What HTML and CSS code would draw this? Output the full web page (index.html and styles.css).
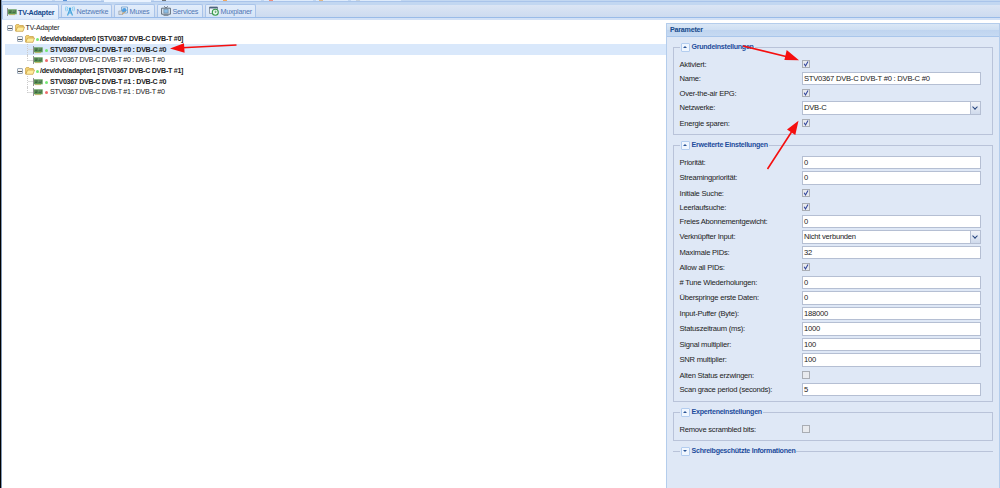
FILE: index.html
```
<!DOCTYPE html>
<html lang="de">
<head>
    <meta charset="utf-8">
    <title>TV-Adapter</title>
    <link rel="stylesheet" href="styles.css">
</head>
<body>

<svg class="defs">
    <symbol id="card" viewBox="0 0 10 8">
        <path d="M.5 0v8" stroke="#777" stroke-width=".8"/>
        <path d="M1 1.3h8.7v5H1z" fill="#5f9a58"/>
        <path d="M2 2.3h2.4v2.6H2zM5.5 2.3h3v2.4h-3z" fill="#3f6640"/>
        <path d="M2 6.6h6" stroke="#b9a94c" stroke-width=".8"/>
        <path d="M5 3h3M2.4 3h1" stroke="#a9c8a5" stroke-width=".6"/>
    </symbol>
    <symbol id="folder" viewBox="0 0 10 8">
        <path d="M.6 7V1.2L1.3.6h2.6l.7.9h3.7V3" fill="#f5d67a" stroke="#c49a3a" stroke-width=".7"/>
        <path d="M.8 7.3 2.5 3h7L8 7.3z" fill="#ffec9c" stroke="#c49a3a" stroke-width=".7"/>
    </symbol>
    <symbol id="antenna" viewBox="0 0 10 10">
        <path d="M5 3 2.5 9.5M5 3l2.5 6.5M3.5 7h3M4.2 5h1.6" fill="none" stroke="#48a5dc" stroke-width="1.2"/>
        <path d="M2.8.8q-1.3 2 0 4M7.2.8q1.3 2 0 4M1.2.3Q-.4 2.8 1.2 5.3M8.8.3q1.6 2.5 0 5" fill="none" stroke="#72c4ee" stroke-width=".8"/>
        <circle cx="5" cy="2.7" r="1.2" fill="#399bd5"/>
    </symbol>
    <symbol id="muxes" viewBox="0 0 10 10">
        <path d="M3.5 1h6v6h-6z" fill="#e8f2fb" stroke="#6e9cc9" stroke-width=".8"/>
        <path d="M.8 5h4v3.5h-4z" fill="#d5d9dd" stroke="#98a4b0" stroke-width=".7"/>
        <circle cx="6.3" cy="4.2" r="2.3" fill="#4e9fe2"/>
        <path d="m4 8.2 3.5-2.7" fill="none" stroke="#d9a35d" stroke-width="1"/>
    </symbol>
    <symbol id="tv" viewBox="0 0 10 10">
        <path d="M3 .3 5 2 7 .3M2.5 9.3h5" fill="none" stroke="#53616d" stroke-width=".8"/>
        <path d="M.6 2.2h8.8v6H.6z" fill="#dfebf6" stroke="#53616d" stroke-width=".9"/>
        <path d="M2.8 3.2h4.4v3.9H2.8z" fill="#8bbfe9" stroke="#647b91" stroke-width=".6"/>
    </symbol>
    <symbol id="planer" viewBox="0 0 10 10">
        <path d="M.5 1h8v6.5h-8z" fill="#eef4fa" stroke="#76828d" stroke-width=".8"/>
        <path d="M.5 1.7h8" stroke="#4c6480" stroke-width="1.5"/>
        <circle cx="6.3" cy="6.3" r="3" fill="#e9faec" stroke="#379b4b" stroke-width="1.1"/>
        <path d="M6.3 4.6v1.9l1.2-.7" fill="none" stroke="#267438" stroke-width=".7"/>
    </symbol>
    <symbol id="tick" viewBox="0 0 8 8">
        <path d="m2.2 3.8 1.3 2.2L6 1.6" fill="none" stroke="#31459c" stroke-width="1.1"/>
    </symbol>
</svg>

<div class="topbar">
    <i class="m1"></i><i class="m2"></i><i class="m3 current"></i><i class="m4"></i><i class="m5"></i><i class="m6"></i><i class="m7"></i><i class="m8"></i>
</div>

<nav class="tabs">
    <a class="tab active t1"><svg class="card"><use href="#card"/></svg>TV-Adapter</a>
    <a class="tab t2"><svg><use href="#antenna"/></svg>Netzwerke</a>
    <a class="tab t3"><svg><use href="#muxes"/></svg>Muxes</a>
    <a class="tab t4"><svg><use href="#tv"/></svg>Services</a>
    <a class="tab t5"><svg><use href="#planer"/></svg>Muxplaner</a>
</nav>

<main>
    <section class="tree">
        <div class="node root"><b class="minus"></b><svg><use href="#folder"/></svg><span>TV-Adapter</span></div>
        <div class="node adapter"><b class="minus"></b><svg><use href="#folder"/></svg><i class="on"></i><span>/dev/dvb/adapter0 [STV0367 DVB-C DVB-T #0]</span></div>
        <div class="node leaf bold selected"><b class="line"></b><svg><use href="#card"/></svg><i class="on"></i><span>STV0367 DVB-C DVB-T #0 : DVB-C #0</span></div>
        <div class="node leaf"><b class="line last"></b><svg><use href="#card"/></svg><i class="off"></i><span>STV0367 DVB-C DVB-T #0 : DVB-T #0</span></div>
        <div class="node adapter"><b class="minus"></b><svg><use href="#folder"/></svg><i class="on"></i><span>/dev/dvb/adapter1 [STV0367 DVB-C DVB-T #1]</span></div>
        <div class="node leaf bold"><b class="line"></b><svg><use href="#card"/></svg><i class="on"></i><span>STV0367 DVB-C DVB-T #1 : DVB-C #0</span></div>
        <div class="node leaf"><b class="line last"></b><svg><use href="#card"/></svg><i class="off"></i><span>STV0367 DVB-C DVB-T #1 : DVB-T #0</span></div>
    </section>

    <section class="panel">
        <h2>Parameter</h2>
        <fieldset>
            <legend><b class="toggle"></b>Grundeinstellungen</legend>
            <div class="row check"><label>Aktiviert:</label><span class="box"><svg><use href="#tick"/></svg></span></div>
            <div class="row"><label>Name:</label><div class="field">STV0367 DVB-C DVB-T #0 : DVB-C #0</div></div>
            <div class="row check"><label>Over-the-air EPG:</label><span class="box"><svg><use href="#tick"/></svg></span></div>
            <div class="row"><label>Netzwerke:</label><div class="field select">DVB-C<b></b></div></div>
            <div class="row check"><label>Energie sparen:</label><span class="box"><svg><use href="#tick"/></svg></span></div>
        </fieldset>

        <fieldset class="advanced">
            <legend><b class="toggle"></b>Erweiterte Einstellungen</legend>
            <div class="row"><label>Priorität:</label><div class="field">0</div></div>
            <div class="row"><label>Streamingpriorität:</label><div class="field">0</div></div>
            <div class="row check"><label>Initiale Suche:</label><span class="box"><svg><use href="#tick"/></svg></span></div>
            <div class="row check"><label>Leerlaufsuche:</label><span class="box"><svg><use href="#tick"/></svg></span></div>
            <div class="row"><label>Freies Abonnementgewicht:</label><div class="field">0</div></div>
            <div class="row"><label>Verknüpfter Input:</label><div class="field select">Nicht verbunden<b></b></div></div>
            <div class="row"><label>Maximale PIDs:</label><div class="field">32</div></div>
            <div class="row check"><label>Allow all PIDs:</label><span class="box"><svg><use href="#tick"/></svg></span></div>
            <div class="row"><label># Tune Wiederholungen:</label><div class="field">0</div></div>
            <div class="row"><label>Überspringe erste Daten:</label><div class="field">0</div></div>
            <div class="row"><label>Input-Puffer (Byte):</label><div class="field">188000</div></div>
            <div class="row"><label>Statuszeitraum (ms):</label><div class="field">1000</div></div>
            <div class="row"><label>Signal multiplier:</label><div class="field">100</div></div>
            <div class="row"><label>SNR multiplier:</label><div class="field">100</div></div>
            <div class="row check"><label>Alten Status erzwingen:</label><span class="box"></span></div>
            <div class="row"><label>Scan grace period (seconds):</label><div class="field">5</div></div>
        </fieldset>

        <fieldset class="expert">
            <legend><b class="toggle"></b>Experteneinstellungen</legend>
            <div class="row check"><label>Remove scrambled bits:</label><span class="box"></span></div>
        </fieldset>

        <fieldset class="collapsed">
            <legend><b class="toggle down"></b>Schreibgeschützte Informationen</legend>
        </fieldset>
    </section>
</main>

<svg class="arrows" viewBox="0 0 1000 488">
    <path d="M236.5 45 182 47.8M743 46l45 11M767.5 169l24-37"/>
    <path class="head" d="m170 48.5 14-5.3.6 9.5zM799 60.3l-12.3-10.2-2.3 9.8zM798.5 120.7l-11.5 8.8 8.3 5.5z"/>
</svg>

</body>
</html>
```

FILE: styles.css
```
* {
    box-sizing: border-box;
}

body {
    margin: 0;
    height: 488px;
    overflow: hidden;
    display: flex;
    flex-direction: column;
    border-left: 1px solid #000;
    box-shadow: inset 1px 0 #7f97b5;
    background: #fff;
    font-family: "Liberation Sans", Arial, sans-serif;
    font-size: 7.1px;
    letter-spacing: -.27px;
    color: #222;
}

svg {
    display: block;
    flex: none;
}

.defs {
    position: absolute;
    width: 0;
    height: 0;
}

/* lower edge of the main tabs */
.topbar {
    height: 5px;
    flex: none;
    display: flex;
    background: linear-gradient(#a9c4ea, #a9c4ea) 0 1px / 100% 1px no-repeat #c2d7f1;
    margin-left: 1px;
}

.topbar i {
    height: 1px;
    margin-right: 3px;
    padding-left: 8px;
    background: #deebfb;
}

.topbar i::before {
    content: "";
    display: block;
    width: 4px;
    height: 1px;
}

.topbar .current {
    height: 2px;
    background: #eaf3ff;
}

.m1 { width: 50px; }
.m2 { width: 46px; }
.m3 { width: 47px; }
.m4 { width: 58px; }
.m5 { width: 46px; }
.m6 { width: 49px; }
.m7 { width: 32px; }
.m8 { width: 50px; }

.topbar .m6 { padding-left: 5px; }
.topbar .m7 { padding-left: 3px; }
.topbar .m8 { padding-left: 5px; }

.m2::before { background: #5b93d6; }
.m4::before { background: #6d7378; }
.m5::before { background: #f0a860; }
.m6::before { background: #ee8f80; }
.m7::before { background: #dfb98a; }
.m8::before { background: #c9d3de; }

.tabs {
    height: 15px;
    flex: none;
    display: flex;
    margin-left: 1px;
    background: linear-gradient(#dbe5f4, #cbdaef);
    border-bottom: 2px solid #d2e1f6;
    box-shadow: inset 0 -1px #99bbe8;
}

.tab {
    height: 13px;
    margin: -1px 2px 0 0;
    display: flex;
    align-items: center;
    padding-left: 3px;
    border: 1px solid #a9c4ea;
    border-bottom: 0;
    border-radius: 2px 2px 0 0;
    background: linear-gradient(#e2edfb, #d6e4f7);
    color: #5077b4;
    font-size: 7.2px;
    letter-spacing: -.25px;
    white-space: nowrap;
}

.tab svg {
    width: 10px;
    height: 10px;
    margin-right: 1.5px;
}

.tab.active {
    height: 15px;
    padding-left: 4px;
    background: linear-gradient(#f0f6ff, #deebfb);
    color: #15498b;
    letter-spacing: -.2px;
    font-weight: bold;
}

.tab.active svg {
    height: 8px;
    margin-right: 1px;
}

.t1 { width: 57px; }
.t2 { width: 51px; }
.t3 { width: 41px; }
.t4 { width: 46px; }
.t5 { width: 51px; }

main {
    flex: 1;
    min-height: 0;
    display: flex;
}

.tree {
    flex: 1;
    margin-left: 1px;
    padding: 3px 0 0 3px;
}

.node {
    height: 10.7px;
    display: flex;
    align-items: center;
    white-space: nowrap;
}

.node svg {
    width: 10px;
    height: 8px;
    margin-right: 1px;
}

.node.root {
    letter-spacing: -.2px;
}

.node.adapter {
    padding-left: 10px;
    font-weight: bold;
}

.node.leaf {
    padding-left: 20px;
}

.node.bold {
    font-weight: bold;
    letter-spacing: -.3px;
}

.node.selected {
    background: #d9e8fb;
}

.node i {
    width: 3px;
    height: 3px;
    border-radius: 2px;
    margin: 1px 2px 0 1px;
    background: #ee6c6c;
}

.node i.on {
    background: #74e874;
}

.node.adapter i {
    margin-left: 0;
    margin-right: 1.5px;
}

.minus {
    width: 6px;
    height: 6px;
    margin: 0 1.5px 0 2px;
    border: 1px solid #9aa9ba;
    border-radius: 1px;
    background: linear-gradient(#555, #555) center / 4px 1px no-repeat #f4f4f4;
}

.line {
    align-self: stretch;
    width: 6px;
    margin: 0 0 0 2px;
    border-left: 1px dotted #ccc;
    background: linear-gradient(#ddd, #ddd) center / 100% 1px no-repeat;
}

.line.last {
    height: 6px;
    background-position: bottom;
}

.panel {
    width: 334px;
    padding: 0 6px;
    margin-top: 3px;
    background: #dfe8f6;
    border: 1px solid #b4cdec;
    border-width: 1px 1px 0;
}

.panel h2 {
    height: 13px;
    margin: 0 -6px 5.5px;
    padding-left: 3px;
    font-size: 7.1px;
    letter-spacing: -.2px;
    line-height: 12px;
    color: #15498b;
    background: linear-gradient(#dae7f6, #cddef3 50%, #bfd4ef 50%, #c6daf2);
    border-bottom: 1px solid #a9c6eb;
}

fieldset {
    min-width: 0;
    margin: 0;
    height: 92px;
    padding: 6px 6px 0 5.5px;
    border: 1px solid #b9c3d9;
}

fieldset.advanced {
    height: 261.5px;
    margin-top: 6px;
}

fieldset.expert {
    height: 33px;
    margin-top: 5.5px;
}

fieldset.collapsed {
    border-width: 1px 0 0;
    margin-top: 6px;
    height: 12px;
    padding-left: 6.5px;
}

legend {
    display: flex;
    align-items: center;
    height: 9px;
    padding: 0 1px 0 1px;
    font-weight: bold;
    color: #1d4c9c;
}

.toggle {
    width: 9px;
    height: 9px;
    margin-right: 2px;
    border: 1px solid #b3cdef;
    border-radius: 1px;
    background: #f0f6fe;
    display: flex;
    align-items: center;
    justify-content: center;
}

.toggle::after {
    content: "";
    border: 2px solid transparent;
    border-top: 0;
    border-bottom-color: #2b5496;
}

.toggle.down::after {
    border: 2px solid transparent;
    border-bottom: 0;
    border-top-color: #2b5496;
}

.row {
    height: 15.5px;
    display: flex;
    font-size: 7.6px;
    letter-spacing: -.23px;
    line-height: 13px;
    white-space: nowrap;
}

.row.check {
    height: 14.2px;
}

.row label {
    width: 122px;
}

.field {
    width: 179px;
    height: 13.5px;
    padding-left: 1.5px;
    border: 1px solid #b5bfd3;
    background: #fff;
    line-height: 12px;
}

.select {
    display: flex;
    justify-content: space-between;
}

.select b {
    width: 10px;
    border-left: 1px solid #b5bfd3;
    background: linear-gradient(#f1f3f8, #cfdaec);
    display: flex;
    align-items: center;
    justify-content: center;
}

.select b::after {
    content: "";
    width: 3px;
    height: 3px;
    margin-top: -2px;
    border: solid #23427c;
    border-width: 0 1.5px 1.5px 0;
    transform: rotate(45deg);
}

.box {
    width: 8px;
    height: 8px;
    margin: 2px 0 0;
    border: 1px solid #a9adb4;
    background: #e8eaee;
}

.box svg {
    width: 8px;
    height: 8px;
    margin: -1px;
}

.arrows {
    position: absolute;
    left: 0;
    top: 0;
    width: 1000px;
    height: 488px;
    fill: none;
    stroke: #f50f0f;
    stroke-width: 1.6;
}

.arrows .head {
    fill: #f50f0f;
    stroke: none;
}
```
